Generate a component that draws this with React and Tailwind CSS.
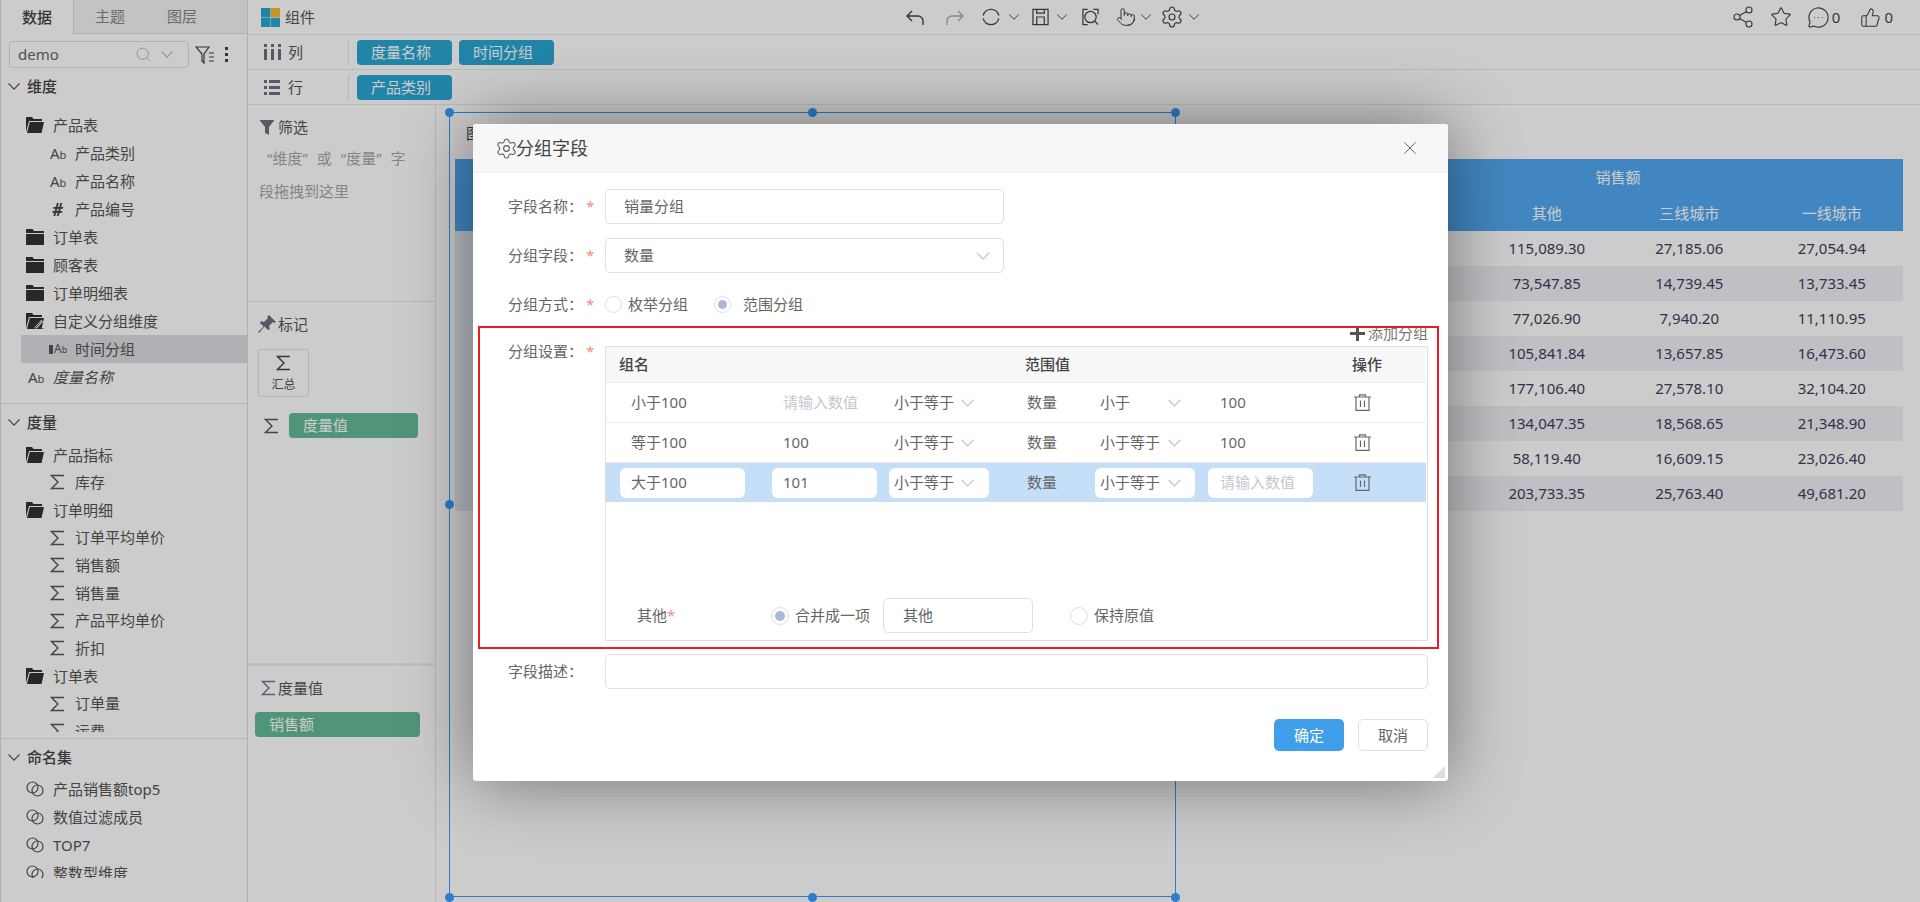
import React from "react";
import { Search, Settings, Share2, Star, MessageCircleMore, ThumbsUp, Pointer } from "lucide-react";

const Chevron = ({ className = "w-[12px] h-[7px] text-[#555]" }) => (
  <svg viewBox="0 0 12 7" fill="none" stroke="currentColor" strokeWidth="1.1" className={className}>
    <path d="M.5.5 6 6.2 11.5.5" />
  </svg>
);

const Sigma = ({ className = "w-[15px] h-[16px] text-[#555]" }) => (
  <svg viewBox="0 0 15 16" fill="none" stroke="currentColor" strokeWidth="1.4" className={className}>
    <path d="M14 1.5H1.5L8 8l-6.5 6.5H14" />
  </svg>
);

const FolderClosed = () => (
  <svg viewBox="0 0 18 16" className="w-[18px] h-[16px] text-[#333]" fill="currentColor">
    <path d="M0 0h6.5l1.5 2h10v2H0zM0 5h18v11H0z" />
  </svg>
);

const FolderOpen = ({ edit }) => (
  <svg viewBox="0 0 18 16" className="w-[18px] h-[16px] text-[#333]" fill="currentColor">
    <path d="M0 0h6l1.5 2H16v2H3L0 15z" />
    <path d="M3.8 5H18l-2.5 11H1z" />
    {edit && <path d="M8 15l7-8 2 1.5-7 8z" fill="#fff" />}
    {edit && <path d="M9 15.5l6-7M7 16h11" stroke="currentColor" strokeWidth="1" fill="none" />}
  </svg>
);

const Ab = () => (
  <span className="text-[#555] text-[15px] leading-none">
    A<span className="text-[11px]">b</span>
  </span>
);

const Rings = () => (
  <svg viewBox="0 0 18 16" fill="none" stroke="#555" strokeWidth="1.2" className="w-[18px] h-[16px]">
    <circle cx="6.5" cy="6.5" r="5.5" />
    <circle cx="11.5" cy="9.5" r="5.5" />
  </svg>
);

const TreeRow = ({ indent, icon, label, h, active, italic }) => (
  <div className={`flex items-center text-[#555] ${h} ${indent} ${active ? "ml-[20px] !pl-[29px] bg-[#dddde3]" : ""}`}>
    {icon}
    <span className={italic ? "italic" : ""}>{label}</span>
  </div>
);

const Folder = ({ label, open, edit, h }) => (
  <TreeRow
    h={h}
    indent="pl-[25px]"
    label={label}
    icon={<span className="w-[27px] flex">{open ? <FolderOpen edit={edit} /> : <FolderClosed />}</span>}
  />
);

const Field = ({ label, icon, h, active }) => (
  <TreeRow h={h} active={active} indent="pl-[49px]" label={label} icon={<span className="w-[25px] flex items-center">{icon}</span>} />
);

const SectionHead = ({ label, h = "h-[36px]" }) => (
  <div className={`flex items-center pl-[7px] text-[#444] font-medium ${h}`}>
    <Chevron className="w-[12px] h-[7px] mr-[7px] text-[#555]" />
    {label}
  </div>
);

const Sidebar = () => (
  <div className="w-[248px] shrink-0 h-full border-r border-[#dcdcdc] border-l flex flex-col bg-white">
    <div className="flex h-[34px] shrink-0">
      <div className="w-[72px] flex items-center justify-center text-[#444] font-medium">数据</div>
      <div className="flex-1 flex items-center bg-[#f4f4f4] border-l border-b border-[#dcdcdc] text-[#888]">
        <span className="w-[72px] text-center">主题</span>
        <span className="w-[72px] text-center">图层</span>
      </div>
    </div>
    <div className="flex items-center h-[27px] mt-[7px] pl-[8px] shrink-0">
      <div className="w-[180px] h-[27px] rounded-[4px] border border-[#dcdfe6] flex items-center pl-[8px] text-[#666]">
        <span className="flex-1">demo</span>
        <Search className="w-[17px] h-[17px] text-[#bbb]" strokeWidth={1.4} />
        <Chevron className="w-[12px] h-[7px] text-[#bbb] ml-[9px] mr-[15px]" />
      </div>
      <svg viewBox="0 0 20 18" fill="none" stroke="#444" strokeWidth="1.2" className="w-[20px] h-[18px] ml-[6px]">
        <path d="M1 1h13L9 8v9l-2-2V8zM14 7h5M14 11h5M14 15h5" />
      </svg>
      <div className="flex flex-col gap-[3px] ml-[10px]">
        <span className="w-[3px] h-[3px] bg-[#444]" />
        <span className="w-[3px] h-[3px] bg-[#444]" />
        <span className="w-[3px] h-[3px] bg-[#444]" />
      </div>
    </div>
    <div className="h-[336px] shrink-0 border-b border-[#e4e4e4]">
      <SectionHead label="维度" h="h-[37px]" />
      <div className="pt-[6px]">
        <Folder h="h-[28px]" label="产品表" open />
        <Field h="h-[28px]" label="产品类别" icon={<Ab />} />
        <Field h="h-[28px]" label="产品名称" icon={<Ab />} />
        <Field h="h-[28px]" label="产品编号" icon={<span className="font-bold italic text-[#444] text-[17px] leading-none pl-[2px]">#</span>} />
        <Folder h="h-[28px]" label="订单表" />
        <Folder h="h-[28px]" label="顾客表" />
        <Folder h="h-[28px]" label="订单明细表" />
        <Folder h="h-[28px]" label="自定义分组维度" open edit />
        <Field
          h="h-[28px]"
          label="时间分组"
          active
          icon={
            <span className="flex items-center -ml-[1px]">
              <span className="w-[4px] h-[9px] bg-[#555] mr-[1px]" />
              <span className="text-[#555] text-[12px] leading-none">A<span className="text-[9px]">b</span></span>
            </span>
          }
        />
        <TreeRow h="h-[28px]" indent="pl-[27px]" italic label="度量名称" icon={<span className="w-[25px] flex"><Ab /></span>} />
      </div>
    </div>
    <div className="h-[335px] shrink-0 border-b border-[#e4e4e4]">
      <div className="h-[328px] overflow-hidden">
        <SectionHead label="度量" h="h-[37px]" />
        <Folder h="h-[27.65px]" label="产品指标" open />
        <Field h="h-[27.65px]" label="库存" icon={<Sigma />} />
        <Folder h="h-[27.65px]" label="订单明细" open />
        <Field h="h-[27.65px]" label="订单平均单价" icon={<Sigma />} />
        <Field h="h-[27.65px]" label="销售额" icon={<Sigma />} />
        <Field h="h-[27.65px]" label="销售量" icon={<Sigma />} />
        <Field h="h-[27.65px]" label="产品平均单价" icon={<Sigma />} />
        <Field h="h-[27.65px]" label="折扣" icon={<Sigma />} />
        <Folder h="h-[27.65px]" label="订单表" open />
        <Field h="h-[27.65px]" label="订单量" icon={<Sigma />} />
        <Field h="h-[27.65px]" label="运费" icon={<Sigma />} />
      </div>
    </div>
    <SectionHead label="命名集" />
    <div className="h-[103px] overflow-hidden shrink-0">
      {["产品销售额top5", "数值过滤成员", "TOP7", "整数型维度"].map((t) => (
        <TreeRow key={t} h="h-[28px]" indent="pl-[25px]" label={t} icon={<span className="w-[27px] flex"><Rings /></span>} />
      ))}
    </div>
  </div>
);

const Pill = ({ label, w }) => (
  <div className={`h-[25px] rounded-[4px] bg-[#2aa7d3] text-white flex items-center pl-[14px] ${w}`}>{label}</div>
);

const ShelfRow = ({ icon, label, pills }) => (
  <div className="h-[35px] shrink-0 flex items-center border-b border-[#e8e8e8]">
    <span className="w-[18px] ml-[16px] mr-[6px] flex">{icon}</span>
    <span className="w-[60px] text-[#555]">{label}</span>
    <div className="h-[25px] border-l border-[#e4e4e4] pl-[8px] flex items-center gap-[7px]">{pills}</div>
  </div>
);

const Caret = ({ className }) => <Chevron className={`w-[10px] h-[6px] text-[#444] ${className}`} />;

const Toolbar = () => (
  <div className="h-[35px] shrink-0 flex items-center border-b border-[#e8e8e8]">
    <svg viewBox="0 0 20 20" className="w-[19px] h-[19px] ml-[13px]">
      <rect x="0" y="0" width="10" height="10" fill="#2aa7d3" />
      <rect x="10.5" y="0" width="9.5" height="10" fill="#f8bb2e" />
      <rect x="0" y="10.5" width="10" height="9.5" fill="#2aa7d3" />
      <rect x="10.5" y="10.5" width="9.5" height="9.5" fill="#2aa7d3" />
    </svg>
    <span className="ml-[5px] text-[#555]">组件</span>
    <div className="ml-[591px] flex items-center text-[#444]">
      <svg viewBox="0 0 18 15" fill="none" stroke="currentColor" strokeWidth="1.4" className="w-[18px] h-[15px]">
        <path d="M6 1 1 6l5 5M1 6h11a5 5 0 0 1 5 5v4" />
      </svg>
      <svg viewBox="0 0 18 15" fill="none" stroke="#aaa" strokeWidth="1.4" className="w-[18px] h-[15px] ml-[22px]">
        <path d="M12 1l5 5-5 5M17 6H6a5 5 0 0 0-5 5v4" />
      </svg>
      <svg viewBox="0 0 18 18" fill="none" stroke="currentColor" strokeWidth="1.3" className="w-[18px] h-[18px] ml-[18px]">
        <path d="M1.2 7.5A8 8 0 0 1 16.8 7.5M16.8 10.5A8 8 0 0 1 1.2 10.5" />
      </svg>
      <Caret className="ml-[9px]" />
      <svg viewBox="0 0 18 18" fill="none" stroke="currentColor" strokeWidth="1.3" className="w-[17px] h-[18px] ml-[13px]">
        <path d="M1 1h16v16H1zM5 1v4h8V1M5 17V9h8v8" />
      </svg>
      <Caret className="ml-[8px]" />
      <svg viewBox="0 0 18 18" fill="none" stroke="currentColor" strokeWidth="1.3" className="w-[17px] h-[18px] ml-[15px]">
        <path d="M6 1H1v16h5M12 1h5v5" />
        <circle cx="9" cy="9" r="6" />
        <path d="M13 13l4 4" />
      </svg>
      <Pointer className="w-[20px] h-[20px] ml-[17px]" strokeWidth={1.2} />
      <Caret className="ml-[5px]" />
      <Settings className="w-[24px] h-[24px] ml-[9px]" strokeWidth={1.2} />
      <Caret className="ml-[5px]" />
    </div>
    <div className="ml-auto mr-[27px] flex items-center text-[#444]">
      <Share2 className="w-[24px] h-[24px]" strokeWidth={1.1} />
      <Star className="w-[22px] h-[22px] ml-[15px]" strokeWidth={1.2} />
      <MessageCircleMore className="w-[23px] h-[23px] ml-[15px]" strokeWidth={1.2} />
      <span className="ml-[2px]">0</span>
      <ThumbsUp className="w-[21px] h-[21px] ml-[20px]" strokeWidth={1.2} />
      <span className="ml-[3px]">0</span>
    </div>
  </div>
);

const FilterPanel = () => (
  <div className="w-[188px] shrink-0 border-r border-[#e4e4e4] flex flex-col h-full">
    <div className="h-[197px] shrink-0 border-b border-[#e4e4e4] pl-[11px]">
      <div className="flex items-center mt-[12px] h-[20px] text-[#555]">
        <svg viewBox="0 0 15 15" className="w-[16px] h-[15px] mr-[3px]" fill="#6b7280">
          <path d="M0 0h15L9.5 7v8l-4-2V7z" />
        </svg>
        筛选
      </div>
      <div className="text-[#a3a7b5] mt-[10px] h-[22px] pl-[8px] flex items-center">
        <span>“维度”</span>
        <span className="ml-[9px]">或</span>
        <span className="ml-[9px]">“度量”</span>
        <span className="ml-[9px]">字</span>
      </div>
      <div className="text-[#a3a7b5] mt-[11px] h-[22px] flex items-center">段拖拽到这里</div>
    </div>
    <div className="h-[361px] shrink-0 pl-[10px]">
      <div className="flex items-center mt-[12px] h-[20px] text-[#555]">
        <svg viewBox="0 0 18 18" className="w-[18px] h-[18px] mr-[2px]" fill="#6b7280">
          <path d="M11 0l7 7-2 1-1-1-4 4 1 3-2 1-3.5-3.5L1 18l-1-1 5.5-5.5L2 8l1-2 3 1 4-4-1-1z" />
        </svg>
        标记
      </div>
      <div className="w-[51px] h-[48px] mt-[15px] border border-[#e2e2e2] rounded-[3px] flex flex-col items-center">
        <Sigma className="w-[15px] h-[16px] mt-[5px] text-[#444]" />
        <span className="text-[12px] leading-none mt-[8px] text-[#555]">汇总</span>
      </div>
      <div className="flex items-center mt-[16px]">
        <span className="ml-[6px] w-[25px]"><Sigma className="w-[15px] h-[16px] text-[#555]" /></span>
        <div className="w-[129px] h-[25px] rounded-[4px] bg-[#65bb96] text-white flex items-center pl-[14px]">度量值</div>
      </div>
    </div>
    <div className="border-t-[3px] border-[#f0f0f0] flex-1 pl-[7px]">
      <div className="flex items-center mt-[12px] h-[20px] text-[#555] pl-[6px]">
        <Sigma className="w-[15px] h-[16px] mr-[2px] text-[#6f7a96]" />
        度量值
      </div>
      <div className="w-[165px] h-[25px] rounded-[4px] bg-[#65bb96] text-white flex items-center pl-[14px] mt-[14px]">销售额</div>
    </div>
  </div>
);

const rows = [
  ["115,089.30", "27,185.06", "27,054.94"],
  ["73,547.85", "14,739.45", "13,733.45"],
  ["77,026.90", "7,940.20", "11,110.95"],
  ["105,841.84", "13,657.85", "16,473.60"],
  ["177,106.40", "27,578.10", "32,104.20"],
  ["134,047.35", "18,568.65", "21,348.90"],
  ["58,119.40", "16,609.15", "23,026.40"],
  ["203,733.35", "25,763.40", "49,681.20"],
];

const Handle = ({ className }) => <span className={`absolute w-[9px] h-[9px] rounded-full bg-[#3a9cff] ${className}`} />;

const Canvas = () => (
  <div className="flex-1 relative pl-[19px] pr-[17px] pt-[17px]">
    <div className="h-[22px] pl-[11px] text-[#444] flex items-center mb-[15px]">图表标题</div>
    <div className="bg-[#53a8f2] text-white h-[72px] flex flex-col">
      <div className="h-[36px] flex items-center justify-end">
        <span className="w-[570px] text-center">销售额</span>
      </div>
      <div className="h-[36px] flex items-center justify-end">
        {["其他", "三线城市", "一线城市"].map((t) => (
          <span key={t} className="w-[142.5px] text-center">{t}</span>
        ))}
      </div>
    </div>
    {rows.map((r, i) => (
      <div key={r[0]} className={`h-[35px] flex items-center text-[#3e3e5c] ${i % 2 ? "bg-[#f0f0f5]" : ""}`}>
        {/* row-header column, almost all of it sits under the dialog */}
        <span className="w-[300px] self-stretch bg-[#e4ebf4] mr-auto" />
        {r.map((v, j) => (
          <span key={j} className="w-[142.5px] text-center">{v}</span>
        ))}
      </div>
    ))}
    <div className="absolute left-[13px] top-[7px] w-[727px] h-[785px] border border-[#3a9cff]" />
    <Handle className="left-[9px] top-[3px]" />
    <Handle className="left-[372px] top-[3px]" />
    <Handle className="left-[735px] top-[3px]" />
    <Handle className="left-[9px] top-[395px]" />
    <Handle className="left-[9px] top-[788px]" />
    <Handle className="left-[372px] top-[788px]" />
    <Handle className="left-[735px] top-[788px]" />
  </div>
);

const Radio = ({ checked, size = "w-[17px] h-[17px]", dot = "w-[9px] h-[9px]" }) => (
  <span className={`rounded-full border border-[#dcdfe6] flex items-center justify-center shrink-0 ${size} ${checked ? "border-[#a9b8dc]" : ""}`}>
    {checked && <span className={`rounded-full bg-[#a9b8dc] ${dot}`} />}
  </span>
);

const FormLabel = ({ label, required = true }) => (
  <div className="w-[132px] shrink-0 pl-[35px] flex items-center text-[#666]">
    <span className="w-[78px]">{label}</span>
    {required && <span className="text-[#f78989]">*</span>}
  </div>
);

const TextBox = ({ value, caret }) => (
  <div className="w-[399px] h-[35px] border border-[#dcdfe6] rounded-[5px] flex items-center pl-[18px] pr-[13px] text-[#666]">
    <span className="flex-1">{value}</span>
    {caret && <Chevron className="w-[14px] h-[8px] text-[#bfc4cf]" />}
  </div>
);

const Cell = ({ edit, w, pl, children }) => (
  <div className={`h-[30px] rounded-[6px] flex items-center shrink-0 ${w} ${pl} ${edit ? "bg-white" : ""}`}>{children}</div>
);

const SelectCaret = ({ right }) => <Chevron className={`w-[13px] h-[8px] text-[#bfc4cf] absolute top-[11px] ${right}`} />;

const Trash = () => (
  <svg viewBox="0 0 17 17" fill="none" stroke="#666" strokeWidth="1.2" className="w-[17px] h-[17px]">
    <path d="M0 3h17M5.5 3V.8h6V3M2 3v13.4h13V3M6.5 6.5v6.5M10.5 6.5v6.5" />
  </svg>
);

const GroupRow = ({ name, min, op1, op2, max, edit }) => (
  <div className={`flex items-center pl-[14px] text-[#666] ${edit ? "bg-[#c5dff9] h-[39px]" : "h-[40px] border-b border-[#eeeef2]"}`}>
    <Cell edit={edit} w="w-[125px]" pl="pl-[11px]">{name}</Cell>
    <Cell edit={edit} w="w-[105px] ml-[27px]" pl="pl-[11px]">
      {min || <span className="text-[#c4c7d0]">请输入数值</span>}
    </Cell>
    <Cell edit={edit} w="w-[100px] ml-[12px] relative" pl="pl-[5px]">{op1}<SelectCaret right="right-[15px]" /></Cell>
    <span className="w-[68px] ml-[38px] shrink-0">数量</span>
    <Cell edit={edit} w="w-[100px] relative" pl="pl-[5px]">{op2}<SelectCaret right="right-[14px]" /></Cell>
    <Cell edit={edit} w="w-[105px] ml-[13px]" pl="pl-[12px]">
      {max || <span className="text-[#c4c7d0]">请输入数值</span>}
    </Cell>
    <span className="ml-[41px]"><Trash /></span>
  </div>
);

const GroupTable = () => (
  <div className="w-[823px] h-[295px] border border-[#dcdfe6] flex flex-col">
    <div className="h-[36px] bg-[#f7f7f7] border-b border-[#eeeef2] shrink-0 flex items-center pl-[13px] text-[#444] font-medium mr-[1px]">
      <span className="w-[406px]">组名</span>
      <span className="w-[327px]">范围值</span>
      <span>操作</span>
    </div>
    <div className="mr-[1px]">
      <GroupRow name="小于100" op1="小于等于" op2="小于" max="100" />
      <GroupRow name="等于100" min="100" op1="小于等于" op2="小于等于" max="100" />
      <GroupRow name="大于100" min="101" op1="小于等于" op2="小于等于" edit />
    </div>
    <div className="mt-auto mb-[7px] h-[35px] flex items-center text-[#666] pl-[31px]">
      <span className="w-[134px] shrink-0">其他<span className="text-[#f78989]">*</span></span>
      <Radio checked size="w-[18px] h-[18px]" dot="w-[10px] h-[10px]" />
      <span className="ml-[6px] w-[75px]">合并成一项</span>
      <div className="ml-[13px] w-[150px] h-[35px] border border-[#dcdfe6] rounded-[5px] flex items-center pl-[19px]">其他</div>
      <span className="ml-[37px]"><Radio size="w-[18px] h-[18px]" /></span>
      <span className="ml-[6px]">保持原值</span>
    </div>
  </div>
);

const Dialog = () => (
  <div className="absolute left-[473px] top-[124px] w-[975px] h-[657px] bg-white rounded-[3px] shadow-[0_0_70px_rgba(0,0,0,0.45)]">
    <div className="h-[49px] bg-[#f7f7f7] border-b border-[#eeeeee] flex items-center pl-[22px] pr-[32px] rounded-t-[3px]">
      <Settings className="w-[23px] h-[23px] text-[#555] -mr-[2px]" strokeWidth={1.1} />
      <span className="text-[18px] text-[#444]">分组字段</span>
      <svg viewBox="0 0 12 12" fill="none" stroke="#666" strokeWidth="1" className="w-[12px] h-[12px] ml-auto">
        <path d="M.5.5l11 11M11.5.5l-11 11" />
      </svg>
    </div>
    <div className="flex h-[35px] mt-[16px]">
      <FormLabel label="字段名称：" />
      <TextBox value="销量分组" />
    </div>
    <div className="flex h-[35px] mt-[14px]">
      <FormLabel label="分组字段：" />
      <TextBox value="数量" caret />
    </div>
    <div className="flex h-[34px] mt-[14px] items-center">
      <FormLabel label="分组方式：" />
      <Radio />
      <span className="ml-[6px] text-[#666]">枚举分组</span>
      <span className="ml-[26px]"><Radio checked /></span>
      <span className="ml-[12px] text-[#666]">范围分组</span>
    </div>
    <div className="h-[25px] flex items-center justify-end pr-[20px] text-[#777]">
      <svg viewBox="0 0 15 15" fill="#555" className="w-[15px] h-[15px] mr-[3px]">
        <path d="M6 0h3v6h6v3H9v6H6V9H0V6h6z" />
      </svg>
      添加分组
    </div>
    <div className="flex">
      <div className="w-[132px] shrink-0 pl-[35px] h-[10px] text-[#666] flex items-center">
        <span className="w-[78px]">分组设置：</span>
        <span className="text-[#f78989]">*</span>
      </div>
      <GroupTable />
    </div>
    <div className="flex h-[35px] mt-[13px]">
      <FormLabel label="字段描述：" required={false} />
      <div className="w-[823px] h-[35px] border border-[#dcdfe6] rounded-[5px]" />
    </div>
    <div className="flex justify-end gap-[14px] mt-[30px] pr-[20px]">
      <div className="w-[70px] h-[32px] rounded-[5px] bg-[#409eea] text-white flex items-center justify-center">确定</div>
      <div className="w-[70px] h-[32px] rounded-[5px] border border-[#dcdfe6] text-[#666] flex items-center justify-center">取消</div>
    </div>
    <div className="absolute left-[5px] top-[202px] w-[961px] h-[323px] border-2 border-[#ed1c24]" />
    <svg viewBox="0 0 12 12" className="absolute right-[3px] bottom-[3px] w-[12px] h-[12px]" fill="#dddddd">
      <path d="M12 0v12H0z" />
    </svg>
  </div>
);

export default function App() {
  return (
    <div className="relative w-[1920px] h-[902px] overflow-hidden bg-white flex font-['Noto_Sans','Noto_Sans_CJK_SC',sans-serif] text-[15px] leading-normal">
      <Sidebar />
      <div className="flex-1 flex flex-col h-full">
        <Toolbar />
        <ShelfRow
          label="列"
          icon={
            <svg viewBox="0 0 18 16" fill="#6b7280" className="w-[18px] h-[16px]">
              <path d="M0 0h3v3H0zM0 5h3v11H0zM7 0h3v3H7zM7 5h3v11H7zM14 0h3v3h-3zM14 5h3v11h-3z" />
            </svg>
          }
          pills={
            <>
              <Pill label="度量名称" w="w-[95px]" />
              <Pill label="时间分组" w="w-[95px]" />
            </>
          }
        />
        <ShelfRow
          label="行"
          icon={
            <svg viewBox="0 0 16 15" fill="#6b7280" className="w-[16px] h-[15px]">
              <path d="M0 0h3v3H0zM5 0h11v3H5zM0 6h3v3H0zM5 6h11v3H5zM0 12h3v3H0zM5 12h11v3H5z" />
            </svg>
          }
          pills={<Pill label="产品类别" w="w-[95px]" />}
        />
        <div className="flex-1 flex min-h-0">
          <FilterPanel />
          <Canvas />
        </div>
      </div>
      <div className="absolute inset-0 bg-black/20" />
      <Dialog />
    </div>
  );
}
